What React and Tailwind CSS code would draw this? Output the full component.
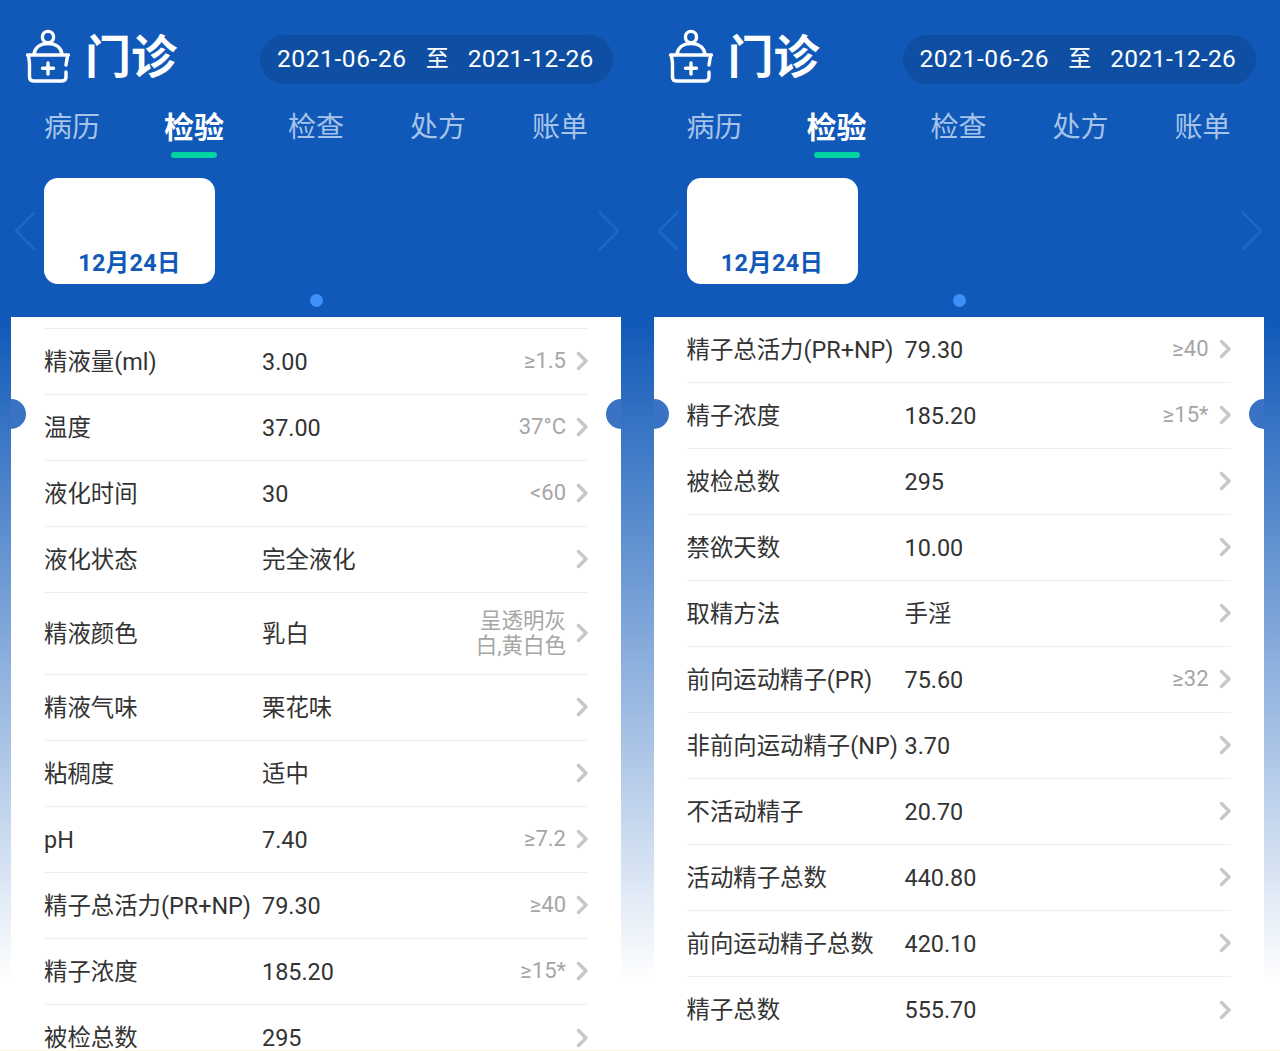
const tabs = ['病历', '检验', '检查', '处方', '账单']

const leftRows = [
  { label: '精液量(ml)', value: '3.00', range: '≥1.5' },
  { label: '温度', value: '37.00', range: '37°C' },
  { label: '液化时间', value: '30', range: '<60' },
  { label: '液化状态', value: '完全液化' },
  { label: '精液颜色', value: '乳白', range: '呈透明灰白,黄白色', tall: true },
  { label: '精液气味', value: '栗花味' },
  { label: '粘稠度', value: '适中' },
  { label: 'pH', value: '7.40', range: '≥7.2' },
  { label: '精子总活力(PR+NP)', value: '79.30', range: '≥40' },
  { label: '精子浓度', value: '185.20', range: '≥15*' },
  { label: '被检总数', value: '295' },
]

const rightRows = [
  { label: '精子总活力(PR+NP)', value: '79.30', range: '≥40' },
  { label: '精子浓度', value: '185.20', range: '≥15*' },
  { label: '被检总数', value: '295' },
  { label: '禁欲天数', value: '10.00' },
  { label: '取精方法', value: '手淫' },
  { label: '前向运动精子(PR)', value: '75.60', range: '≥32' },
  { label: '非前向运动精子(NP)', value: '3.70' },
  { label: '不活动精子', value: '20.70' },
  { label: '活动精子总数', value: '440.80' },
  { label: '前向运动精子总数', value: '420.10' },
  { label: '精子总数', value: '555.70' },
]

function ClinicIcon() {
  return (
    <svg className="mt-[-7px]" width="48" height="56" viewBox="24 28 48 56" fill="none" stroke="white" strokeWidth="3.4" strokeLinecap="round" strokeLinejoin="round">
      <circle cx="48" cy="37" r="5.6" />
      <path d="M34 54C35 47 41 43.5 48 43.5C55 43.5 61 47 62 54" />
      <path d="M27.5 55H68.5" />
      <path d="M28.5 56L29.5 63V77Q29.5 81 33.5 81H62Q66 81 66 77V72" />
      <path d="M67.5 56L66 65" />
      <path d="M48 63V74M42.5 68.3H53.5" />
    </svg>
  )
}

function Row({ row }) {
  return (
    <div className={`flex items-center pt-[2px] border-b last:border-b-0 border-[#eeeeee] shrink-0 ${row.tall ? 'h-[82px]' : 'h-[66px]'}`}>
      <span className="w-[218px] shrink-0 whitespace-nowrap text-[23.4px] text-[#333333]">{row.label}</span>
      <span className="text-[23.4px] text-[#333333] whitespace-nowrap">{row.value}</span>
      <span className={`ml-auto mt-[-3px] max-w-[96px] text-right leading-[25.5px] text-[#a6a6a6] ${row.tall ? 'text-[21.5px]' : 'text-[22px]'}`}>{row.range}</span>
      <svg className="ml-[10px] mt-[-3px] shrink-0" width="12" height="20" viewBox="0 0 12 20" fill="none" stroke="#c7c7cc" strokeWidth="3.4" strokeLinecap="round" strokeLinejoin="round">
        <path d="M2.5 2.5L10 10L2.5 17.5" />
      </svg>
    </div>
  )
}

function Panel({ rows, topGap }) {
  return (
    <div className="relative w-[642.5px] shrink-0 h-full flex flex-col pt-[35px]">
      <div className="flex h-[49px] pl-[24px]">
        <div className="flex items-center w-[236px]">
          <ClinicIcon />
          <span className="ml-[13px] mt-[-5px] text-[46px] font-semibold leading-none text-white">门诊</span>
        </div>
        <div className="flex items-center gap-[19px] w-[353px] rounded-full bg-[#0f4fa3] pl-[17px] text-[24.5px] tracking-[0.6px] text-white">
          <span>2021-06-26</span>
          <span className="text-[23px] tracking-normal">至</span>
          <span className="tracking-[0.2px]">2021-12-26</span>
        </div>
      </div>

      <div className="grid grid-cols-5 w-[610px] ml-[11px] mt-[24px]">
        {tabs.map((tab, i) => (
          <div key={tab} className="flex flex-col items-center">
            <span className={`h-[40px] leading-[40px] ${i === 1 ? 'text-[30px] font-bold text-white' : 'text-[28px] text-[#a6c3ea]'}`}>{tab}</span>
            <div className={`mt-[4px] h-[6px] w-[46px] rounded-full ${i === 1 ? 'bg-[#00d4a0]' : ''}`} />
          </div>
        ))}
      </div>

      <div className="relative mt-[20px] h-[106px]">
        <div className="ml-[44px] flex h-full w-[171px] items-end justify-center rounded-[14px] bg-white pb-[5px] text-[23.4px] font-bold tracking-[0.3px] leading-[32px] text-[#1059b8]">
          12月24日
        </div>
        <svg className="absolute left-[14px] top-[33px]" width="22" height="40" viewBox="0 0 22 40" fill="none" stroke="#1b68c9" strokeWidth="2.5">
          <path d="M21 1L2 20L21 39" />
        </svg>
        <svg className="absolute left-[598px] top-[33px]" width="22" height="40" viewBox="0 0 22 40" fill="none" stroke="#1b68c9" strokeWidth="2.5">
          <path d="M1 1L20 20L1 39" />
        </svg>
      </div>

      <div className="mt-[10px] mb-[10px] ml-[310px] h-[13px] w-[13px] rounded-full bg-[#3d8ffa]" />

      <div className="relative ml-[11px] w-[610px] flex-1 overflow-hidden bg-white px-[33px]">
        <div className="flex flex-col">
          {topGap && <div className="h-[12px] shrink-0 border-b border-[#eeeeee]" />}
          {rows.map((row) => (
            <Row key={row.label} row={row} />
          ))}
        </div>
        <div className="absolute left-[-15px] top-[82px] h-[30px] w-[30px] rounded-full bg-[#3a73c4]" />
        <div className="absolute right-[-15px] top-[82px] h-[30px] w-[30px] rounded-full bg-[#3a73c4]" />
      </div>
    </div>
  )
}

export default function App() {
  return (
    <div className="w-[1280px] h-[1051px] overflow-hidden flex flex-col font-[Roboto,'Noto_Sans_CJK_SC',sans-serif]">
      <div className="flex h-[1050px] bg-[linear-gradient(to_bottom,#1059b8_320px,#ffffff_980px)]">
        <Panel rows={leftRows} topGap />
        <Panel rows={rightRows} />
      </div>
      <div className="h-px bg-[#fdf7df]" />
    </div>
  )
}
